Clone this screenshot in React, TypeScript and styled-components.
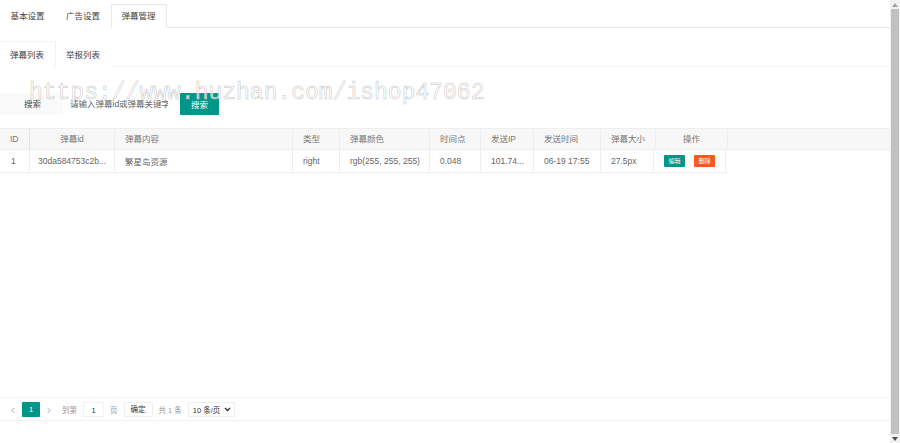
import styled, { createGlobalStyle } from "styled-components";

const GlobalStyle = createGlobalStyle`
  html, body {
    margin: 0;
    padding: 0;
    background: #fff;
  }
  body {
    font-family: "Liberation Sans", "Noto Sans CJK SC", sans-serif;
    color: #666;
  }
`;

interface Danmu {
  id: number;
  danmuId: string;
  content: string;
  type: string;
  color: string;
  time: string;
  ip: string;
  sendTime: string;
  size: string;
}

const rows: Danmu[] = [
  {
    id: 1,
    danmuId: "30da584753c2b...",
    content: "繁星岛资源",
    type: "right",
    color: "rgb(255, 255, 255)",
    time: "0.048",
    ip: "101.74...",
    sendTime: "06-19 17:55",
    size: "27.5px",
  },
];

const columns = [
  { title: "ID", width: 30, align: "left" },
  { title: "弹幕id", width: 85, align: "center" },
  { title: "弹幕内容", width: 178, align: "left" },
  { title: "类型", width: 47, align: "left" },
  { title: "弹幕颜色", width: 90, align: "left" },
  { title: "时间点", width: 51, align: "left" },
  { title: "发送IP", width: 53, align: "left" },
  { title: "发送时间", width: 67, align: "left" },
  { title: "弹幕大小", width: 53, align: "left" },
  { title: "操作", width: 72, align: "center" },
];

export default function App() {
  return (
    <>
      <GlobalStyle />
      <Shell>
        <Main>
          <TabBar>
            <Tab>基本设置</Tab>
            <Tab>广告设置</Tab>
            <Tab $active>弹幕管理</Tab>
          </TabBar>

          <SubTabBar>
            <SubTab $active>弹幕列表</SubTab>
            <SubTab>举报列表</SubTab>
          </SubTabBar>

          <SearchRow>
            <SearchLabel>搜索</SearchLabel>
            <SearchInput placeholder="请输入弹幕id或弹幕关键字" />
            <Button $color="#009688">搜索</Button>
          </SearchRow>

          <Table>
            <HeadRow>
              {columns.map((c) => (
                <HeadCell key={c.title} $w={c.width} $align={c.align}>
                  {c.title}
                </HeadCell>
              ))}
              <Filler />
            </HeadRow>
            {rows.map((r) => (
              <BodyRow key={r.id}>
                <Cell $w={30}>{r.id}</Cell>
                <Cell $w={85}>{r.danmuId}</Cell>
                <Cell $w={178}>{r.content}</Cell>
                <Cell $w={47}>{r.type}</Cell>
                <Cell $w={90}>{r.color}</Cell>
                <Cell $w={51}>{r.time}</Cell>
                <Cell $w={53}>{r.ip}</Cell>
                <Cell $w={67}>{r.sendTime}</Cell>
                <Cell $w={53}>{r.size}</Cell>
                <Cell $w={72} $align="center">
                  <SmallBtn $color="#009688">编辑</SmallBtn>
                  <SmallBtn $color="#FF5722">删除</SmallBtn>
                </Cell>
              </BodyRow>
            ))}
          </Table>

          <Spacer />

          <Pager>
            <Arrow>‹</Arrow>
            <PageNum>1</PageNum>
            <Arrow>›</Arrow>
            <PagerText>到第</PagerText>
            <PageInput>1</PageInput>
            <PagerText>页</PagerText>
            <PagerBtn>确定</PagerBtn>
            <PagerText>共 1 条</PagerText>
            <PageSelect>
              10 条/页
              <svg width="7" height="5" viewBox="0 0 7 5">
                <path d="M1 1 L3.5 3.5 L6 1" fill="none" stroke="#333" strokeWidth="1.3" />
              </svg>
            </PageSelect>
          </Pager>

          <Watermark aria-hidden="true">https://www.huzhan.com/ishop47062</Watermark>
        </Main>

        <ScrollTrack>
          <ScrollArrow>
            <svg width="6" height="4" viewBox="0 0 6 4">
              <path d="M0 4 L3 0 L6 4 Z" fill="#a3a3a3" />
            </svg>
          </ScrollArrow>
          <ScrollThumb />
          <ScrollArrow>
            <svg width="6" height="4" viewBox="0 0 6 4">
              <path d="M0 0 L3 4 L6 0 Z" fill="#505050" />
            </svg>
          </ScrollArrow>
        </ScrollTrack>
      </Shell>
    </>
  );
}

const Shell = styled.div`
  display: flex;
  width: 900px;
  height: 443px;
  overflow: hidden;
`;

const Main = styled.div`
  position: relative;
  flex: 1;
  display: flex;
  flex-direction: column;
  min-width: 0;
`;

const TabBar = styled.div`
  display: flex;
  align-items: flex-end;
  height: 28px;
  border-bottom: 1px solid #e6e6e6;
  box-sizing: border-box;
`;

const Tab = styled.div<{ $active?: boolean }>`
  height: 24px;
  line-height: 23px;
  padding: 0 10px 0 9.5px;
  font-size: 8.5px;
  color: #444;
  box-sizing: border-box;
  margin-bottom: -1px;
  border: 1px solid ${(p) => (p.$active ? "#e6e6e6" : "transparent")};
  border-bottom-color: ${(p) => (p.$active ? "#fff" : "transparent")};
  background: #fff;
  ${(p) => p.$active && "border-radius: 2px 2px 0 0;"}
`;

const SubTabBar = styled.div`
  display: flex;
  align-items: flex-end;
  height: 26px;
  margin-top: 13px;
  border-bottom: 1px solid #f2f2f2;
  box-sizing: border-box;
`;

const SubTab = styled.div<{ $active?: boolean }>`
  height: 26px;
  line-height: 26px;
  padding: 0 11px 0 10px;
  font-size: 8.5px;
  color: #444;
  box-sizing: border-box;
  margin-bottom: -1px;
  border-right: 1px solid ${(p) => (p.$active ? "#f2f2f2" : "transparent")};
  border-top: 1px solid ${(p) => (p.$active ? "#f2f2f2" : "transparent")};
  background: #fff;
`;

const SearchRow = styled.div`
  display: flex;
  align-items: center;
  height: 22px;
  margin-top: 26px;
`;

const SearchLabel = styled.div`
  width: 63px;
  height: 22px;
  line-height: 22px;
  padding-left: 24px;
  box-sizing: border-box;
  background: #fafafa;
  font-size: 8.5px;
  color: #444;
`;

const SearchInput = styled.input`
  width: 112px;
  height: 22px;
  box-sizing: border-box;
  border: none;
  outline: none;
  padding: 0 7px;
  font-size: 8.5px;
  font-family: inherit;
  background: #fff;
  &::placeholder {
    color: #666;
  }
`;

const Button = styled.div<{ $color: string }>`
  margin-left: 5px;
  width: 39px;
  height: 22px;
  line-height: 24px;
  text-align: center;
  font-size: 8.5px;
  color: #fff;
  background: ${(p) => p.$color};
  border-radius: 1px;
`;

const Table = styled.div`
  margin-top: 13px;
  display: flex;
  flex-direction: column;
`;

const HeadRow = styled.div`
  display: flex;
  height: 22px;
  background: #f7f7f7;
  border-top: 1px solid #eee;
  border-bottom: 1px solid #eee;
  box-sizing: border-box;
`;

const HeadCell = styled.div<{ $w: number; $align: string }>`
  flex: 0 0 ${(p) => p.$w}px;
  box-sizing: border-box;
  padding: 0 10px;
  line-height: 20px;
  font-size: 8.5px;
  color: #777;
  text-align: ${(p) => p.$align};
  border-right: 1px solid #eee;
  white-space: nowrap;
  &:first-child {
    border-right-color: #e2e2e2;
  }
`;

const Filler = styled.div`
  flex: 1;
`;

const BodyRow = styled.div`
  display: flex;
  height: 23px;
  width: 727px;
  border-bottom: 1px solid #eee;
  box-sizing: border-box;
`;

const Cell = styled.div<{ $w: number; $align?: string }>`
  flex: 0 0 ${(p) => p.$w}px;
  display: flex;
  align-items: center;
  justify-content: ${(p) => (p.$align === "center" ? "center" : "flex-start")};
  gap: 9px;
  box-sizing: border-box;
  padding: 0 10px;
  font-size: 8.5px;
  color: #666;
  border-right: 1px solid #eee;
  white-space: nowrap;
  overflow: hidden;
  &:first-child {
    padding-left: 11px;
  }
  &:nth-child(2) {
    padding-left: 8px;
  }
`;

const SmallBtn = styled.div<{ $color: string }>`
  width: 21px;
  height: 12px;
  line-height: 12px;
  text-align: center;
  font-size: 6px;
  color: #fff;
  background: ${(p) => p.$color};
  border-radius: 1px;
`;

const Spacer = styled.div`
  flex: 1;
`;

const Pager = styled.div`
  display: flex;
  align-items: center;
  height: 24px;
  margin-bottom: 22px;
  padding-left: 6px;
  border-top: 1px solid #f2f2f2;
  border-bottom: 1px solid #f2f2f2;
  box-sizing: border-box;
  font-size: 7.5px;
  color: #333;
`;

const Arrow = styled.div`
  width: 14px;
  text-align: center;
  font-size: 13px;
  color: #c2c2c2;
  line-height: 15px;
`;

const PageNum = styled.div`
  width: 18px;
  height: 15px;
  line-height: 15px;
  text-align: center;
  margin: 0 2px;
  background: #009688;
  color: #fff;
  border-radius: 1px;
`;

const PagerText = styled.div`
  margin: 0 6px;
  color: #999;
  white-space: nowrap;
`;

const PageInput = styled.div`
  width: 21px;
  height: 15px;
  line-height: 15px;
  text-align: center;
  border: 1px solid #f2f2f2;
  box-sizing: border-box;
  color: #333;
`;

const PagerBtn = styled.div`
  height: 15px;
  line-height: 13px;
  padding: 0 6px;
  border: 1px solid #f0f0f0;
  box-sizing: border-box;
  color: #333;
`;

const PageSelect = styled.div`
  display: flex;
  align-items: center;
  gap: 4px;
  height: 15px;
  padding: 0 3px 0 4px;
  border: 1px solid #f0f0f0;
  box-sizing: border-box;
  color: #333;
`;

const Watermark = styled.div`
  position: absolute;
  left: 29px;
  top: 82px;
  font-family: "Liberation Mono", monospace;
  font-size: 23px;
  line-height: 23px;
  color: rgba(255, 255, 255, 0.7);
  -webkit-text-stroke: 0.5px #c4c4c4;
  white-space: nowrap;
  pointer-events: none;
`;

const ScrollTrack = styled.div`
  flex: 0 0 10px;
  display: flex;
  flex-direction: column;
  background: #f1f1f1;
`;

const ScrollArrow = styled.div`
  height: 9px;
  display: flex;
  align-items: center;
  justify-content: center;
`;

const ScrollThumb = styled.div`
  flex: 1;
  margin: 0 1px;
  background: #c1c1c1;
`;
